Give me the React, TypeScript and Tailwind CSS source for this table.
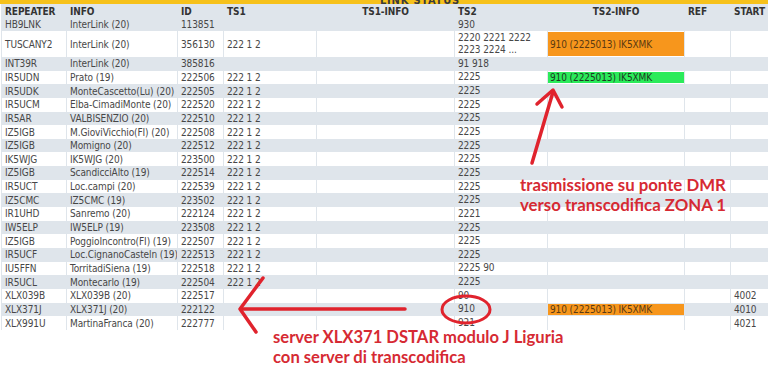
const COLS = [65, 111, 46, 93, 138, 93, 137, 46, 60];

type Row = {
  rep: string;
  info: string;
  id: string;
  ts1?: string;
  ts2?: string[];
  ts2info?: { text: string; tone: "orange" | "green" };
  start?: string;
  tall?: boolean;
};

const rows: Row[] = [
  { rep: "HB9LNK", info: "InterLink (20)", id: "113851", ts2: ["930"] },
  {
    rep: "TUSCANY2",
    info: "InterLink (20)",
    id: "356130",
    ts1: "222 1 2",
    ts2: ["2220 2221 2222", "2223 2224 ..."],
    ts2info: { text: "910 (2225013) IK5XMK", tone: "orange" },
    tall: true,
  },
  { rep: "INT39R", info: "InterLink (20)", id: "385816", ts2: ["91 918"] },
  {
    rep: "IR5UDN",
    info: "Prato (19)",
    id: "222506",
    ts1: "222 1 2",
    ts2: ["2225"],
    ts2info: { text: "910 (2225013) IK5XMK", tone: "green" },
  },
  { rep: "IR5UDK", info: "MonteCascetto(Lu) (20)", id: "222505", ts1: "222 1 2", ts2: ["2225"] },
  { rep: "IR5UCM", info: "Elba-CimadiMonte (20)", id: "222520", ts1: "222 1 2", ts2: ["2225"] },
  { rep: "IR5AR", info: "VALBISENZIO (20)", id: "222510", ts1: "222 1 2", ts2: ["2225"] },
  { rep: "IZ5IGB", info: "M.GioviVicchio(FI) (20)", id: "222508", ts1: "222 1 2", ts2: ["2225"] },
  { rep: "IZ5IGB", info: "Momigno (20)", id: "222512", ts1: "222 1 2", ts2: ["2225"] },
  { rep: "IK5WJG", info: "IK5WJG (20)", id: "223500", ts1: "222 1 2", ts2: ["2225"] },
  { rep: "IZ5IGB", info: "ScandicciAlto (19)", id: "222514", ts1: "222 1 2", ts2: ["2225"] },
  { rep: "IR5UCT", info: "Loc.campi (20)", id: "222539", ts1: "222 1 2", ts2: ["2225"] },
  { rep: "IZ5CMC", info: "IZ5CMC (19)", id: "223502", ts1: "222 1 2", ts2: ["2225"] },
  { rep: "IR1UHD", info: "Sanremo (20)", id: "222124", ts1: "222 1 2", ts2: ["2221"] },
  { rep: "IW5ELP", info: "IW5ELP (19)", id: "223508", ts1: "222 1 2", ts2: ["2225"] },
  { rep: "IZ5IGB", info: "PoggioIncontro(FI) (19)", id: "222507", ts1: "222 1 2", ts2: ["2225"] },
  { rep: "IR5UCF", info: "Loc.CignanoCasteln (19)", id: "222513", ts1: "222 1 2", ts2: ["2225"] },
  { rep: "IU5FFN", info: "TorritadiSiena (19)", id: "222518", ts1: "222 1 2", ts2: ["2225 90"] },
  { rep: "IR5UCL", info: "Montecarlo (19)", id: "222504", ts1: "222 1 2", ts2: ["2225"] },
  { rep: "XLX039B", info: "XLX039B (20)", id: "222517", ts2: ["90"], start: "4002" },
  {
    rep: "XLX371J",
    info: "XLX371J (20)",
    id: "222122",
    ts2: ["910"],
    ts2info: { text: "910 (2225013) IK5XMK", tone: "orange" },
    start: "4010",
  },
  { rep: "XLX991U", info: "MartinaFranca (20)", id: "222777", ts2: ["921"], start: "4021" },
];

const headers = ["REPEATER", "INFO", "ID", "TS1", "TS1-INFO", "TS2", "TS2-INFO", "REF", "START"];

function Cell({ i, children, className = "" }: { i: number; children?: React.ReactNode; className?: string }) {
  return (
    <div
      style={{ width: COLS[i] }}
      className={`shrink-0 flex items-center border-l border-[#dfe5eb] px-[3px] whitespace-nowrap overflow-hidden ${className}`}
    >
      {children}
    </div>
  );
}

export default function App() {
  return (
    <div className="relative w-[768px] h-[375px] overflow-hidden bg-white font-['DejaVu_Sans_Condensed','DejaVu_Sans',sans-serif] text-[10px] tracking-[-0.1px] text-[#474747]">
      {/* Link status bar, title cut off at top */}
      <div className="h-[4px] bg-[#f6c11b] overflow-hidden flex items-end pl-[380px]">
        <span className="font-bold text-[11px] leading-[11px] mb-[-2px] text-[#3a3a3a] tracking-[0.8px]">LINK STATUS</span>
      </div>

      <div className="pl-[1px] w-[900px]">
        {/* Header */}
        <div className="flex h-[14px] bg-[#dfe5eb] font-bold text-[#333]">
          {headers.map((h, i) => (
            <Cell key={h} i={i} className={i === 4 || i === 6 ? "justify-center" : ""}>
              {h}
            </Cell>
          ))}
        </div>

        {rows.map((r, n) => (
          <div
            key={n}
            className={`flex ${r.tall ? "h-[26px]" : n === 0 ? "h-[13px]" : "h-[13.65px]"} ${
              n % 2 === 0 ? "bg-[#dfe5eb]" : "bg-white"
            }`}
          >
            <Cell i={0}>{r.rep}</Cell>
            <Cell i={1} className="!pr-0">{r.info}</Cell>
            <Cell i={2}>{r.id}</Cell>
            <Cell i={3}>{r.ts1}</Cell>
            <Cell i={4} />
            <Cell i={5} className="flex-col !items-start justify-center leading-[12px]">
              {r.ts2?.map((t) => (
                <span key={t}>{t}</span>
              ))}
            </Cell>
            <Cell i={6} className="!px-0 py-[1px] items-stretch">
              {r.ts2info && (
                <div
                  className={`flex-1 flex items-center px-[2px] ${
                    r.ts2info.tone === "orange" ? "bg-[#f7961c] text-[#5a3a12]" : "bg-[#2beb5a] text-[#1e3a22]"
                  }`}
                >
                  {r.ts2info.text}
                </div>
              )}
            </Cell>
            <Cell i={7} />
            <Cell i={8}>{r.start}</Cell>
          </div>
        ))}
      </div>

      {/* Annotations */}
      <div className="absolute left-[520px] top-[175px] font-['Lato',sans-serif] font-bold text-[16.8px] leading-[20px] tracking-normal text-[#d62a33]">
        <div>trasmissione su ponte DMR</div>
        <div>verso transcodifica ZONA 1</div>
      </div>
      <div className="absolute left-[273px] top-[327px] font-['Lato',sans-serif] font-bold text-[16.6px] leading-[20px] tracking-normal text-[#d62a33]">
        <div>server XLX371 DSTAR modulo J Liguria</div>
        <div>con server di transcodifica</div>
      </div>

      <svg className="absolute inset-0 pointer-events-none" width="768" height="375" viewBox="0 0 768 375">
        <g stroke="#e0232d" strokeWidth="3.5" strokeLinecap="round" strokeLinejoin="round" fill="none">
          <line x1="532" y1="163" x2="553" y2="92" />
          <polyline points="537,104 553,90 562,107" />
          <line x1="405" y1="309" x2="243" y2="309" />
          <polyline points="263,278 240,309 256,332" />
          <ellipse cx="466" cy="309.5" rx="24" ry="13.5" strokeWidth="3" />
        </g>
      </svg>
    </div>
  );
}
